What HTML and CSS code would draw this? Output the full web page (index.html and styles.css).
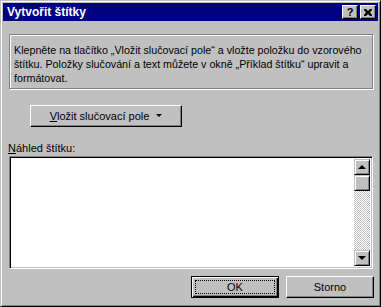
FILE: index.html
```html
<!DOCTYPE html>
<html lang="cs">
<head>
    <meta charset="UTF-8">
    <title>Vytvořit štítky</title>
    <link rel="stylesheet" href="styles.css">
</head>
<body>
    <div class="window">
        <div class="titlebar">
            <span class="title">Vytvořit štítky</span>
            <div class="caption-btn help">?</div>
            <div class="caption-btn close">
                <svg width="8" height="7" viewBox="0 0 8 7"><path d="M0 0h2l2 2 2-2h2v1L6 3.5 8 6v1H6L4 5 2 7H0V6l2-2.5L0 1z" fill="#000"/></svg>
            </div>
        </div>
        <div class="content">
            <div class="group">
                Klepněte na tlačítko „Vložit slučovací pole“ a vložte položku do vzorového<br>
                štítku. Položky slučování a text můžete v okně „Příklad štítku“ upravit a<br>
                formátovat.
            </div>
            <div class="button insert"><span><u>V</u>ložit slučovací pole</span><span class="arrow"></span></div>
            <div class="label"><u>N</u>áhled štítku:</div>
            <div class="preview">
                <div class="area"></div>
                <div class="scrollbar">
                    <div class="sb-btn"><span class="tri up"></span></div>
                    <div class="sb-thumb"></div>
                    <div class="sb-track"></div>
                    <div class="sb-btn"><span class="tri down"></span></div>
                </div>
            </div>
            <div class="footer">
                <div class="button default"><div class="focus">OK</div></div>
                <div class="button">Storno</div>
            </div>
        </div>
    </div>
</body>
</html>
```

FILE: styles.css
```css
body {
    margin: 0;
    background: #c0c0c0;
    font-family: "Liberation Sans", Arial, sans-serif;
    font-size: 11px;
    color: #000;
}
.window {
    width: 381px;
    height: 307px;
    box-sizing: border-box;
    background: #c0c0c0;
    border: 1px solid;
    border-color: #c0c0c0 #000 #000 #c0c0c0;
    box-shadow: inset 1px 1px #fff, inset -1px -1px #808080;
    padding: 2px;
    display: flex;
    flex-direction: column;
}
.titlebar {
    height: 18px;
    background: #000080;
    display: flex;
    align-items: center;
    padding: 0 2px;
    gap: 2px;
}
.title {
    flex: 1;
    color: #fff;
    font-weight: bold;
    font-size: 12px;
    padding-left: 2px;
}
.caption-btn {
    width: 16px;
    height: 14px;
    box-sizing: border-box;
    background: #c0c0c0;
    border: 1px solid;
    border-color: #fff #000 #000 #fff;
    box-shadow: inset -1px -1px #808080;
    display: flex;
    align-items: center;
    justify-content: center;
    font-weight: bold;
    font-size: 11px;
    line-height: 1;
}
.content {
    flex: 1;
    display: flex;
    flex-direction: column;
}
.group {
    margin: 13px 5px 0 6px;
    height: 55px;
    box-sizing: border-box;
    border: 1px solid #808080;
    box-shadow: inset 1px 1px #fff, 1px 1px #fff;
    padding: 8px 4px 0 4px;
    line-height: 14px;
    white-space: nowrap;
    font-size: 10.7px;
}
.button {
    width: 88px;
    height: 22px;
    box-sizing: border-box;
    border: 1px solid;
    border-color: #fff #000 #000 #fff;
    box-shadow: inset -1px -1px #808080;
    display: flex;
    align-items: center;
    justify-content: center;
}
.insert {
    width: 152px;
    margin: 16px 0 0 27px;
    gap: 7px;
}
.arrow {
    width: 0;
    height: 0;
    border-left: 3px solid transparent;
    border-right: 3px solid transparent;
    border-top: 3px solid #000;
    margin-top: -1px;
}
.label {
    margin: 15px 0 0 5px;
    line-height: 13px;
}
.preview {
    margin: 1px 5px 0 6px;
    height: 113px;
    box-sizing: border-box;
    border: 1px solid;
    border-color: #808080 #fff #fff #808080;
    box-shadow: inset 1px 1px #000, inset -1px -1px #c0c0c0;
    padding: 2px;
    background: #fff;
    display: flex;
}
.area {
    flex: 1;
}
.scrollbar {
    width: 16px;
    display: flex;
    flex-direction: column;
}
.sb-btn, .sb-thumb {
    height: 16px;
    box-sizing: border-box;
    background: #c0c0c0;
    border: 1px solid;
    border-color: #c0c0c0 #000 #000 #c0c0c0;
    box-shadow: inset 1px 1px #fff, inset -1px -1px #808080;
    display: flex;
    align-items: center;
    justify-content: center;
}
.sb-track {
    flex: 1;
    background-image: repeating-conic-gradient(#c0c0c0 0 25%, #fff 0 50%);
    background-size: 2px 2px;
}
.tri {
    width: 0;
    height: 0;
    border-left: 4px solid transparent;
    border-right: 4px solid transparent;
}
.tri.up {
    border-bottom: 4px solid #000;
    margin-top: -1px;
}
.tri.down {
    border-top: 4px solid #000;
}
.footer {
    display: flex;
    justify-content: flex-end;
    gap: 7px;
    margin: 7px 4px 0 0;
}
.button.default {
    border-color: #000;
    box-shadow: inset 1px 1px #fff, inset -1px -1px #000, inset -2px -2px #808080;
    padding: 3px;
}
.focus {
    width: 100%;
    height: 100%;
    box-sizing: border-box;
    border: 1px dotted #000;
    display: flex;
    align-items: center;
    justify-content: center;
}
```
